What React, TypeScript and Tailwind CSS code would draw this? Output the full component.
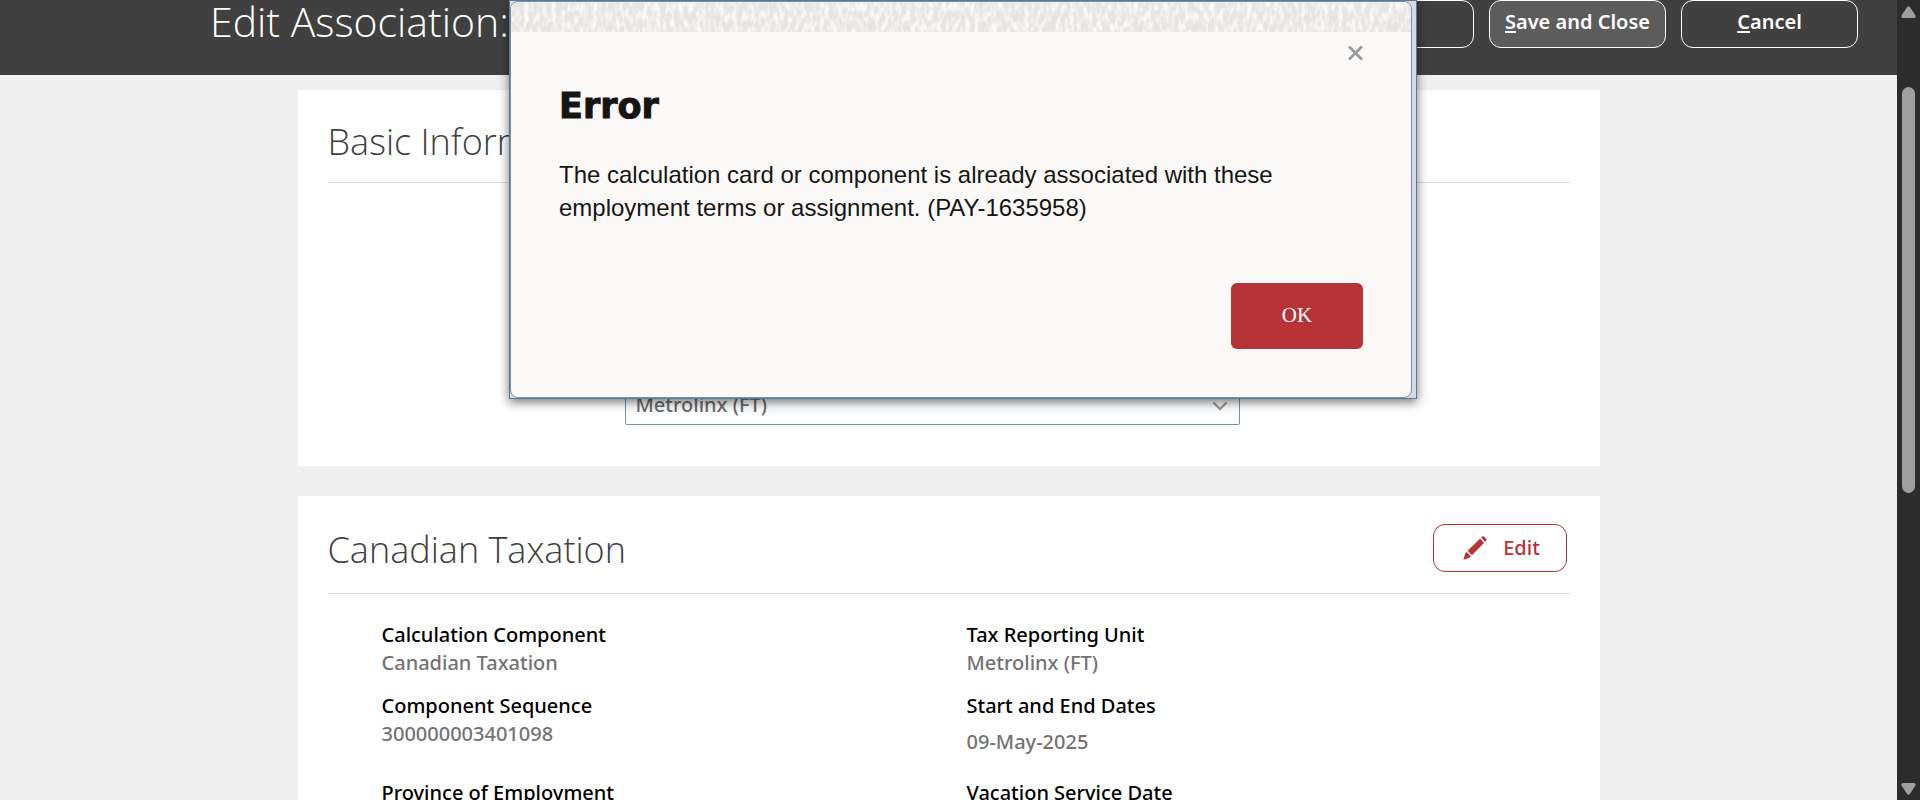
import React from "react";

type Field = { label: string; value: string; spaced?: boolean };

const fields: Field[] = [
  { label: "Calculation Component", value: "Canadian Taxation" },
  { label: "Tax Reporting Unit", value: "Metrolinx (FT)" },
  { label: "Component Sequence", value: "300000003401098" },
  { label: "Start and End Dates", value: "09-May-2025", spaced: true },
  { label: "Province of Employment", value: "Ontario" },
  { label: "Vacation Service Date", value: "09-May-2025" },
];

function Header() {
  const button =
    "flex h-12 w-[177px] items-center justify-center rounded-xl border border-white pb-1 text-xl font-semibold text-white";
  return (
    <header className="flex h-[75px] shrink-0 items-start justify-between bg-[#404040] pl-[210px] pr-[39px]">
      <h1 className="whitespace-nowrap font-['Open_Sans',sans-serif] text-[41px] font-light leading-[42px] text-white">
        Edit Association:
      </h1>
      <div className="flex gap-[15px]">
        <button className={button} aria-label="Save" />
        <button className={`${button} bg-[#5c5c5c]`}>
          <span>
            <u className="decoration-2 underline-offset-2">S</u>ave and Close
          </span>
        </button>
        <button className={button}>
          <span>
            <u className="decoration-2 underline-offset-2">C</u>ancel
          </span>
        </button>
      </div>
    </header>
  );
}

function BasicInformation() {
  return (
    <section className="mx-auto flex h-[376px] w-full max-w-[1302px] shrink-0 flex-col justify-between bg-white px-[30px] pb-[41px]">
      <h2 className="h-[93px] border-b border-[#d6dfe6] pt-[26px] font-['Open_Sans',sans-serif] text-[36px] font-light leading-[52px] text-[#404040]">
        Basic Information
      </h2>
      <div className="relative ml-[297px] w-[615px]">
        <select
          aria-label="Tax Reporting Unit"
          className="block h-10 w-full appearance-none rounded-xs border border-[#7b929f] bg-[#fcfdfe] px-[10px] text-xl font-medium text-[#6b6b6b]"
        >
          <option>Metrolinx (FT)</option>
        </select>
        <svg
          className="pointer-events-none absolute right-3 top-4"
          width="16"
          height="10"
          viewBox="0 0 16 10"
          fill="none"
          stroke="#9b9b9b"
          strokeWidth="2.4"
        >
          <path d="M1.5 1.5 8 8l6.500-6.500" />
        </svg>
      </div>
    </section>
  );
}

function PencilIcon() {
  return (
    <svg width="24" height="24" viewBox="0 0 24 24" fill="#b63338">
      <path d="M18.300 1.400 19.500.3Q20.300-.1 21 .500L23.300 3Q23.900 3.800 23.300 4.500L22 5.900Z" />
      <path d="M17.200 2.500 21 6.900 8.900 19.200 4.600 14.800Z" />
      <path d="M3.700 16 7.900 20.200 5.900 22 .5 23.800 2 18Z" />
    </svg>
  );
}

function CanadianTaxation() {
  return (
    <section className="mx-auto w-full max-w-[1302px] shrink-0 bg-white px-[30px] pb-8">
      <div className="flex h-[98px] items-start justify-between border-b border-[#d6dfe6] pr-[3px] pt-7">
        <h2 className="font-['Open_Sans',sans-serif] text-[36px] font-light leading-[52px] text-[#404040]">
          Canadian Taxation
        </h2>
        <button className="flex h-12 w-[134px] items-center justify-center gap-4 rounded-xl border border-[#b63338] pl-1 text-xl font-medium text-[#b63338]">
          <PencilIcon />
          Edit
        </button>
      </div>
      <dl className="grid grid-cols-[585px_1fr] gap-y-[15px] pl-[54px] pt-[27px] text-xl leading-7">
        {fields.map((f) => (
          <div key={f.label}>
            <dt className="font-medium text-black">{f.label}</dt>
            <dd
              className={
                f.spaced
                  ? "py-2 font-medium text-[#737373]"
                  : "font-medium text-[#737373]"
              }
            >
              {f.value}
            </dd>
          </div>
        ))}
      </dl>
    </section>
  );
}

function Scrollbar() {
  return (
    <div
      aria-hidden="true"
      className="flex w-[23px] shrink-0 flex-col items-center bg-[#2c2c2c] pb-[5px] pt-[6px]"
    >
      <svg width="15" height="12" viewBox="0 0 15 12" fill="#9f9f9f">
        <path d="M6 1.200Q7.500-.6 9 1.200L14.500 9.500Q15 12 13 12H2Q0 12 .5 9.500Z" />
      </svg>
      <div className="flex min-h-0 w-[13px] grow flex-col pt-[69px]">
        <div className="h-7/12 rounded-full bg-[#9f9f9f]" />
      </div>
      <svg width="15" height="12" viewBox="0 0 15 12" fill="#9f9f9f">
        <path d="M6 10.800Q7.500 12.600 9 10.800L14.500 2.500Q15 0 13 0H2Q0 0 .5 2.500Z" />
      </svg>
    </div>
  );
}

function ErrorDialog() {
  return (
    <div
      role="dialog"
      aria-modal="true"
      aria-labelledby="error-title"
      className="absolute left-[509px] top-0 w-[908px] border border-[#5f7a90] bg-[#d5dbdf] pr-1 font-['Liberation_Sans',Arial,sans-serif] shadow-[0_3px_10px_rgba(0,0,0,0.55)]"
    >
      <div className="overflow-hidden rounded-[8px] border border-[#7991a5] bg-[#fbf9f8]">
        <svg className="block h-[30px] w-full" aria-hidden="true">
          <filter id="weave" x="0" y="0" width="100%" height="100%">
            <feTurbulence
              type="fractalNoise"
              baseFrequency="0.22 0.1"
              numOctaves="2"
              seed="4"
            />
            <feColorMatrix values="0 0 0 0 0.965  0 0 0 0 0.96  0 0 0 0 0.955  3 0 0 0 -1.2" />
          </filter>
          <rect width="100%" height="100%" fill="#e6e5e3" />
          <rect width="100%" height="100%" filter="url(#weave)" />
        </svg>
        <div className="flex flex-col px-12 pb-12 pt-[13px]">
          <button aria-label="Close" className="self-end">
            <svg
              width="15"
              height="16"
              viewBox="0 0 15 16"
              stroke="#9a9d9f"
              strokeWidth="2.800"
            >
              <path d="M1 1.500 14 14.500M14 1.500 1 14.500" />
            </svg>
          </button>
          <h2
            id="error-title"
            className="mt-[21px] font-['DejaVu_Sans',sans-serif] text-[35px] font-bold leading-[48px] text-[#161513] [-webkit-text-stroke:1px_#161513]"
          >
            Error
          </h2>
          <p className="mt-7 max-w-[760px] text-2xl leading-[33px] text-[#161513]">
            The calculation card or component is already associated with these
            employment terms or assignment. (PAY-1635958)
          </p>
          <button className="mt-[59px] h-[66px] w-[132px] self-end rounded-md bg-[#b63338] font-['Liberation_Serif',serif] text-[21px] text-white">
            OK
          </button>
        </div>
      </div>
    </div>
  );
}

export default function App() {
  return (
    <div className="relative flex h-screen overflow-hidden bg-[#f0f0f0] font-['Noto_Sans','Open_Sans',sans-serif]">
      <main className="flex min-w-0 grow flex-col overflow-hidden">
        <Header />
        <div className="flex flex-col gap-[30px] pt-[15px]">
          <BasicInformation />
          <CanadianTaxation />
        </div>
      </main>
      <Scrollbar />
      <ErrorDialog />
    </div>
  );
}
